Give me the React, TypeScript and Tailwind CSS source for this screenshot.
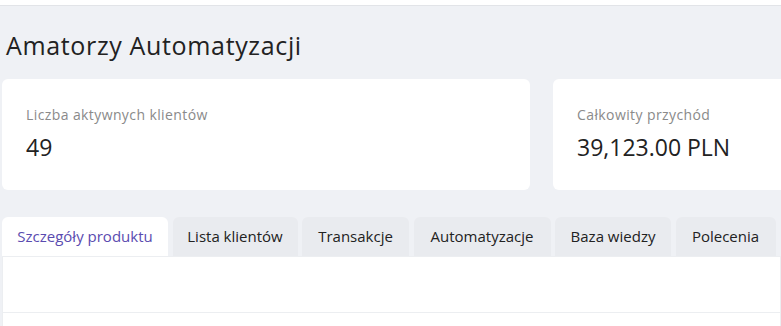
export default function App() {
  const tabs = [
    { label: 'Szczegóły produktu', w: 'w-[166px]' },
    { label: 'Lista klientów', w: 'w-[125px]' },
    { label: 'Transakcje', w: 'w-[107px]' },
    { label: 'Automatyzacje', w: 'w-[137px]' },
    { label: 'Baza wiedzy', w: 'w-[116px]' },
    { label: 'Polecenia', w: 'w-[100px]' },
  ];

  return (
    <div
      className="h-[326px] w-[781px] overflow-hidden bg-[#eff1f5] text-[#222]"
      style={{ fontFamily: '"Open Sans", "Noto Sans", sans-serif' }}
    >
      <div className="h-[6px] border-b border-[#e2e4e8] bg-white" />
      <div className="pl-[2px]">
        <h1 className="mt-[23px] ml-[4px] text-[25px] leading-[32px] tracking-[0.65px]">Amatorzy Automatyzacji</h1>

        <div className="mt-[18px] flex gap-[23px]">
          <div className="h-[111px] w-[528px] shrink-0 rounded-[6px] bg-white pl-[24px] pt-[26px]">
            <div className="text-[14px] leading-[20px] tracking-[0.4px] text-[#8a8a8a]">Liczba aktywnych klientów</div>
            <div className="mt-[8px] text-[23px] leading-[28px]">49</div>
          </div>
          <div className="h-[111px] w-[300px] shrink-0 rounded-[6px] bg-white pl-[24px] pt-[26px]">
            <div className="text-[14px] leading-[20px] tracking-[0.4px] text-[#8a8a8a]">Całkowity przychód</div>
            <div className="mt-[8px] text-[23px] leading-[28px]">39,123.00 PLN</div>
          </div>
        </div>

        <div className="mt-[27px] flex gap-[4.5px]">
          {tabs.map((t, i) => (
            <div
              key={t.label}
              className={`flex h-[39px] shrink-0 items-center justify-center rounded-t-[6px] text-[15px] ${t.w} ${
                i === 0 ? 'bg-white text-[#5a4bb0]' : 'bg-[#e9ebef] text-[#222]'
              }`}
            >
              {t.label}
            </div>
          ))}
        </div>

        <div className="h-[80px] border border-[#eceef1] bg-white">
          <div className="h-[56px] border-b border-[#eceef1]" />
        </div>
      </div>
    </div>
  );
}
